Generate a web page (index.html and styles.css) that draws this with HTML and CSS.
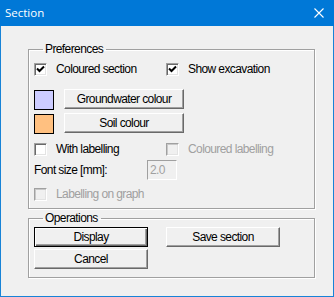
FILE: index.html
```html
<!DOCTYPE html>
<html lang="en">
<head>
    <meta charset="UTF-8">
    <title>Section</title>
    <link rel="stylesheet" href="styles.css">
</head>
<body>
    <div class="window">
        <div class="titlebar">
            <span class="title">Section</span>
            <svg class="close" width="10" height="10" viewBox="0 0 10 10">
                <path d="M0.5 0.5 L9.5 9.5 M9.5 0.5 L0.5 9.5" stroke="#fff" stroke-width="1.1" fill="none"/>
            </svg>
        </div>
        <div class="content">
            <fieldset class="group prefs">
                <legend>Preferences</legend>
                <div class="pair first">
                    <label class="check"><span class="box"><svg width="9" height="9" viewBox="0 0 9 9"><path d="M1 3.5 L3.5 6 L8 1.5" stroke="#000" stroke-width="2" fill="none"/></svg></span>Coloured section</label>
                    <label class="check"><span class="box"><svg width="9" height="9" viewBox="0 0 9 9"><path d="M1 3.5 L3.5 6 L8 1.5" stroke="#000" stroke-width="2" fill="none"/></svg></span>Show excavation</label>
                </div>
                <div class="colour-row water">
                    <span class="swatch swatch-water"></span>
                    <button class="btn colour-btn">Groundwater colour</button>
                </div>
                <div class="colour-row">
                    <span class="swatch swatch-soil"></span>
                    <button class="btn colour-btn">Soil colour</button>
                </div>
                <div class="pair labels">
                    <label class="check"><span class="box"></span>With labelling</label>
                    <label class="check disabled"><span class="box"></span>Coloured labelling</label>
                </div>
                <div class="field">
                    <span class="field-label">Font size [mm]:</span>
                    <span class="input disabled">2.0</span>
                </div>
                <div class="single">
                    <label class="check disabled"><span class="box"></span>Labelling on graph</label>
                </div>
            </fieldset>
            <fieldset class="group ops">
                <legend>Operations</legend>
                <div class="ops-grid">
                    <button class="btn default">Display</button>
                    <button class="btn">Save section</button>
                    <button class="btn">Cancel</button>
                </div>
            </fieldset>
        </div>
    </div>
</body>
</html>
```

FILE: styles.css
```css
* {
    margin: 0;
    padding: 0;
    box-sizing: border-box;
}

body {
    background: #f0f0f0;
    font-family: "Liberation Sans", Arial, sans-serif;
    font-size: 12px;
    letter-spacing: -0.6px;
    color: #000;
}

.window {
    width: 334px;
    height: 297px;
    border: 1px solid #1883d7;
    border-top: none;
    background: #f0f0f0;
}

/* Title bar */
.titlebar {
    height: 26px;
    background: #0078d7;
    display: flex;
    align-items: center;
    justify-content: space-between;
    margin: 0 -1px;
    padding: 0 10px 0 5px;
}

.title {
    font-family: "Open Sans", "Noto Sans", sans-serif;
    font-size: 11.5px;
    letter-spacing: 0;
    color: #fff;
    line-height: 26px;
}

.close {
    display: block;
}

/* Group boxes */
.content {
    padding: 16px 18px 0 27px;
}

.group {
    border: 1px solid #a0a0a0;
    box-shadow: 1px 1px 0 #fff, inset 1px 1px 0 #fff;
    padding: 0 5px 7px 5px;
    min-width: 0;
}

.group legend {
    margin-left: 9px;
    padding: 0 3px 0 2px;
    line-height: 14px;
}

.ops {
    margin-top: 2px;
    padding-bottom: 8px;
}

/* Checkboxes */
.pair {
    display: grid;
    grid-template-columns: 132px 1fr;
    height: 13px;
}

.pair.first {
    margin-top: 7px;
}

.pair.labels {
    margin-top: 9px;
}

.single {
    margin-top: 8px;
    height: 13px;
}

.check {
    display: flex;
    align-items: center;
    height: 13px;
    line-height: 13px;
    white-space: nowrap;
}

.box {
    width: 13px;
    height: 13px;
    margin-right: 9px;
    background: #fff;
    border: 1px solid;
    border-color: #a0a0a0 #fff #fff #a0a0a0;
    box-shadow: inset 1px 1px 0 #696969, inset -1px -1px 0 #e3e3e3;
    display: flex;
    align-items: center;
    justify-content: center;
    flex-shrink: 0;
}

.box svg {
    display: block;
}

.check.disabled {
    color: #a0a0a0;
}

.check.disabled .box {
    background: #f0f0f0;
    box-shadow: inset 1px 1px 0 #c8c8c8, inset -1px -1px 0 #e3e3e3;
}

/* Colour rows */
.colour-row {
    display: flex;
    align-items: flex-start;
    gap: 10px;
    margin-top: 3px;
}

.colour-row.water {
    margin-top: 13px;
}

.swatch {
    width: 20px;
    height: 20px;
    border: 1px solid #000;
    margin-top: 1px;
}

.swatch-water {
    background: #ccccff;
}

.swatch-soil {
    background: #ffc080;
}

/* Buttons */
.btn {
    font-family: inherit;
    font-size: 12px;
    letter-spacing: -0.6px;
    height: 20px;
    background: #f0f0f0;
    color: #000;
    border: 1px solid;
    border-color: #fff #696969 #696969 #fff;
    box-shadow: inset -1px -1px 0 #a0a0a0;
    line-height: 16px;
}

.colour-btn {
    width: 120px;
}

.btn.default {
    border-color: #000;
    box-shadow: inset 1px 1px 0 #fff, inset -1px -1px 0 #696969, inset -2px -2px 0 #a0a0a0;
}

.ops-grid {
    display: grid;
    grid-template-columns: 114px 114px;
    column-gap: 18px;
    row-gap: 2px;
    margin-top: 2px;
}

/* Font size field */
.field {
    display: flex;
    align-items: center;
    margin-top: 4px;
    height: 20px;
}

.field-label {
    width: 113px;
}

.input {
    width: 30px;
    height: 20px;
    border: 1px solid;
    border-color: #a0a0a0 #fff #fff #a0a0a0;
    padding-left: 2px;
    line-height: 18px;
}

.input.disabled {
    color: #a0a0a0;
}
```
